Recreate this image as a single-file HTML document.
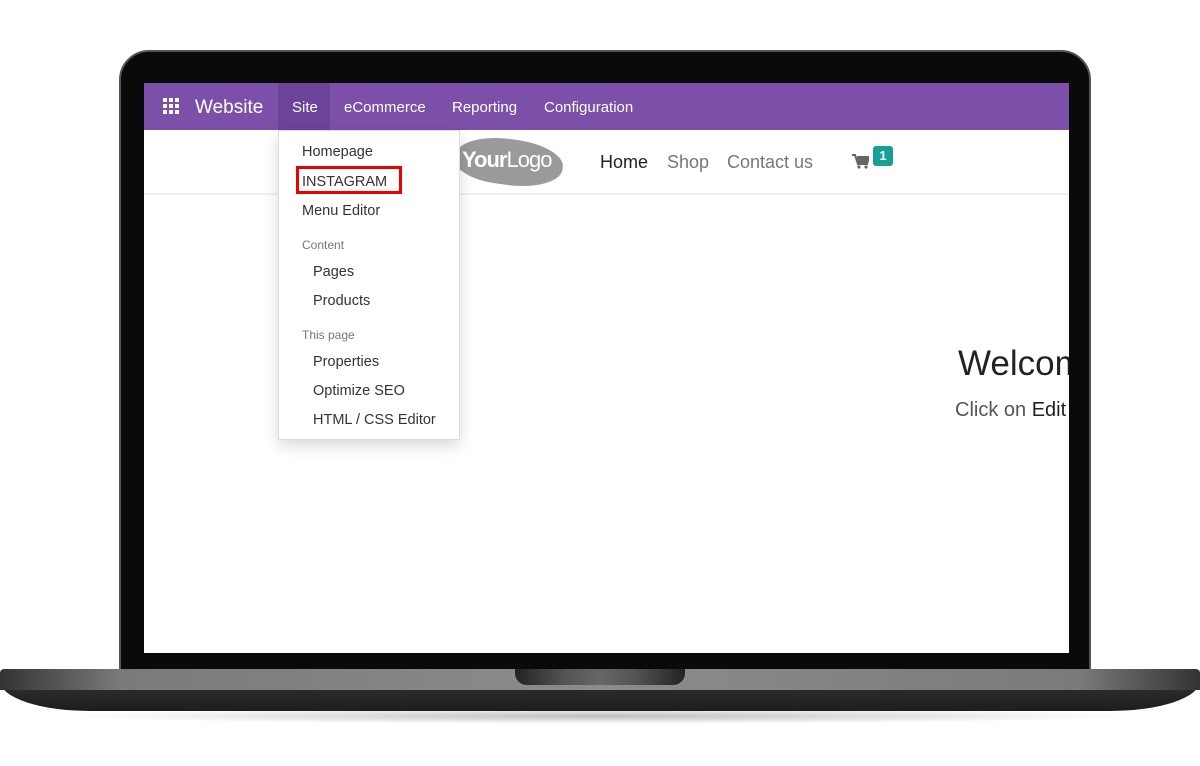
<!DOCTYPE html>
<html><head><meta charset="utf-8"><style>
*{margin:0;padding:0;box-sizing:border-box}
body{width:1200px;height:766px;background:#fff;position:relative;overflow:hidden;font-family:"Liberation Sans",sans-serif}
.a{position:absolute;white-space:nowrap}
</style></head><body>
<!-- lid -->
<div class="a" style="left:119px;top:50px;width:972px;height:624px;background:#0a0a0a;border-radius:30px 30px 0 0;border:2px solid #555"></div>
<div class="a" style="left:144px;top:83px;width:925px;height:570px;background:#fff;overflow:hidden">
  <div class="a" style="left:814px;top:261px;font-size:35px;color:#222">Welcome</div>
  <div class="a" style="left:811px;top:316px;font-size:20px;color:#555">Click on <span style="color:#222">Edit</span> to start</div>
</div>
<!-- navbar -->
<div class="a" style="left:144px;top:83px;width:925px;height:47px;background:#7c4fa8"></div>
<div class="a" style="left:278px;top:83px;width:52px;height:47px;background:#6d4399"></div>
<svg class="a" style="left:163px;top:98px" width="16" height="16" viewBox="0 0 16 16" fill="#fff"><rect x="0" y="0" width="4" height="4"/><rect x="6" y="0" width="4" height="4"/><rect x="12" y="0" width="4" height="4"/><rect x="0" y="6" width="4" height="4"/><rect x="6" y="6" width="4" height="4"/><rect x="12" y="6" width="4" height="4"/><rect x="0" y="12" width="4" height="4"/><rect x="6" y="12" width="4" height="4"/><rect x="12" y="12" width="4" height="4"/></svg>
<div class="a" style="left:195px;top:97px;font-size:19px;color:#fff">Website</div>
<div class="a" style="left:292px;top:99px;font-size:15px;color:#fff">Site</div>
<div class="a" style="left:344px;top:99px;font-size:15px;color:#fff">eCommerce</div>
<div class="a" style="left:452px;top:99px;font-size:15px;color:#fff">Reporting</div>
<div class="a" style="left:544px;top:99px;font-size:15px;color:#fff">Configuration</div>
<!-- site header -->
<div class="a" style="left:144px;top:193px;width:925px;height:2px;background:#f0f0f0"></div>
<div class="a" style="left:455px;top:139px;width:108px;height:46px;background:#9a9a9a;border-radius:50% 45% 50% 40%;transform:rotate(8deg)"></div>
<div class="a" style="left:462px;top:147px;font-size:22px;color:#fff;letter-spacing:-1px"><b>Your</b>Logo</div>
<div class="a" style="left:600px;top:152px;font-size:18px;color:#222">Home</div>
<div class="a" style="left:667px;top:152px;font-size:18px;color:#777">Shop</div>
<div class="a" style="left:727px;top:152px;font-size:18px;color:#777">Contact us</div>
<svg class="a" style="left:852px;top:154px" width="17" height="15" viewBox="0 0 17 15" fill="#666"><path d="M0 1h3l3 9h9l2-7H5" stroke="#666" stroke-width="2" fill="none"/><rect x="5" y="3" width="11" height="6"/><circle cx="7" cy="13" r="1.6"/><circle cx="14" cy="13" r="1.6"/></svg>
<div class="a" style="left:873px;top:146px;width:20px;height:20px;background:#17a096;border-radius:3px;color:#fff;font-size:13px;font-weight:bold;text-align:center;line-height:20px">1</div>
<!-- dropdown -->
<div class="a" style="left:278px;top:130px;width:182px;height:310px;background:#fff;border:1px solid #ddd;box-shadow:0 6px 14px rgba(0,0,0,.15)"></div>
<div class="a" style="left:302px;top:144px;font-size:14.5px;color:#333">Homepage</div>
<div class="a" style="left:296px;top:166px;width:106px;height:28px;border:3px solid #e00"></div>
<div class="a" style="left:302px;top:174px;font-size:14.5px;color:#333">INSTAGRAM</div>
<div class="a" style="left:302px;top:203px;font-size:14.5px;color:#333">Menu Editor</div>
<div class="a" style="left:302px;top:238px;font-size:12px;color:#777">Content</div>
<div class="a" style="left:313px;top:264px;font-size:14.5px;color:#333">Pages</div>
<div class="a" style="left:313px;top:293px;font-size:14.5px;color:#333">Products</div>
<div class="a" style="left:302px;top:328px;font-size:12px;color:#777">This page</div>
<div class="a" style="left:313px;top:354px;font-size:14.5px;color:#333">Properties</div>
<div class="a" style="left:313px;top:383px;font-size:14.5px;color:#333">Optimize SEO</div>
<div class="a" style="left:313px;top:412px;font-size:14.5px;color:#333">HTML / CSS Editor</div>
<!-- base -->
<div class="a" style="left:60px;top:708px;width:1080px;height:16px;border-radius:50%;background:radial-gradient(ellipse at center,rgba(0,0,0,.25),rgba(0,0,0,0) 70%)"></div>
<div class="a" style="left:0;top:669px;width:1200px;height:42px;border-radius:4px 4px 90px 90px/4px 4px 30px 30px;background:linear-gradient(#3a3a3a,#2b2b2b 50%,#1d1d1d)"></div>
<div class="a" style="left:0;top:669px;width:1200px;height:21px;border-radius:6px 6px 0 0;background:linear-gradient(90deg,#333,#7a7a7a 10%,#8c8c8c 50%,#7a7a7a 90%,#333)"></div>
<div class="a" style="left:515px;top:669px;width:170px;height:16px;border-radius:0 0 12px 12px;background:linear-gradient(90deg,#222,#555 30%,#666 50%,#555 70%,#222)"></div>
</body></html>
